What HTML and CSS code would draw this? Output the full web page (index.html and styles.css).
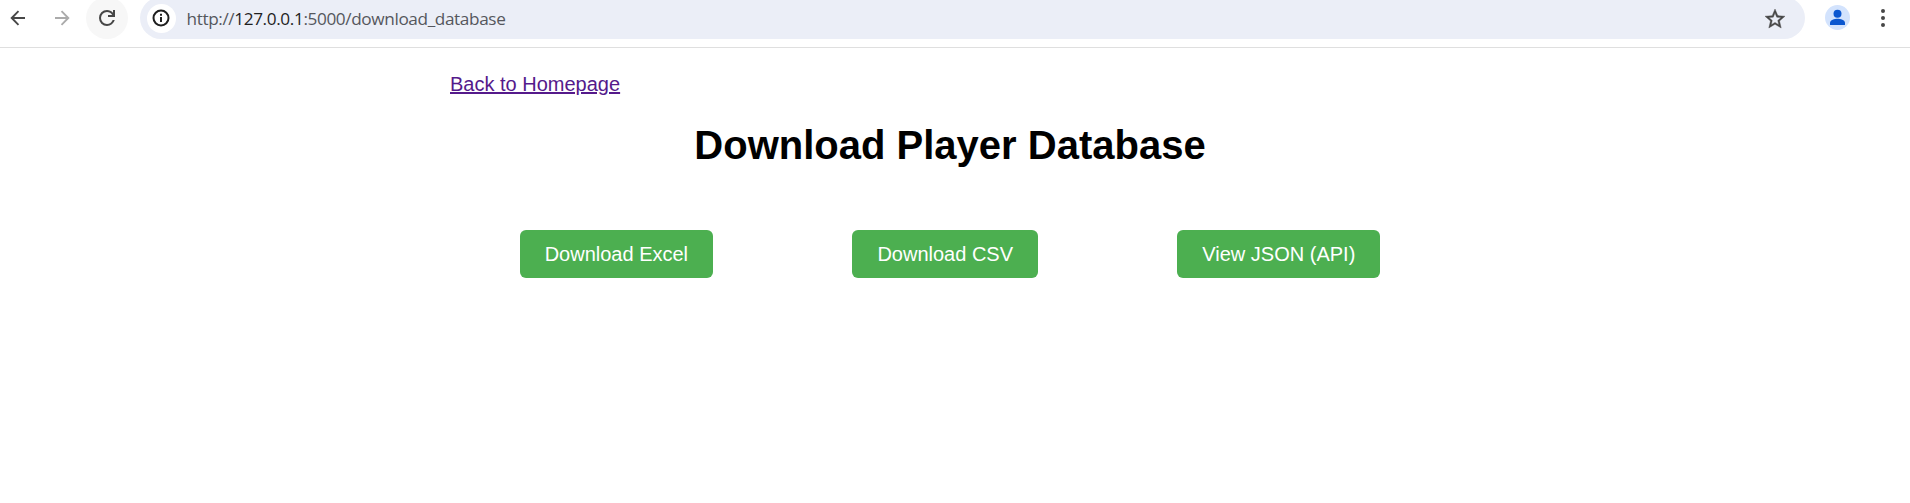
FILE: index.html
```html
<!DOCTYPE html>
<html lang="en">
<head>
<meta charset="utf-8">
<title>Download Player Database</title>
<link rel="stylesheet" href="styles.css">
</head>
<body>
<header class="toolbar">
  <svg class="nav-icon back" viewBox="0 0 16 16"><path d="M15 8H2M8.500 1.200 1.700 8l6.800 6.800"/></svg>
  <svg class="nav-icon forward" viewBox="0 0 16 16"><path d="M1 8h13M7.500 1.200 14.300 8l-6.800 6.800"/></svg>
  <div class="reload"><svg class="reload-icon" viewBox="4 4 16 16"><path d="M12 20q-3.350 0-5.675-2.325T4 12q0-3.350 2.325-5.675T12 4q1.725 0 3.300.713T18 6.750V4h2v7h-7V9h4.200q-.8-1.400-2.188-2.200T12 6Q9.500 6 7.750 7.750T6 12q0 2.500 1.750 4.250T12 18q1.925 0 3.475-1.100T17.650 14h2.100q-.7 2.650-2.850 4.325T12 20z"/></svg></div>
  <div class="address">
    <div class="info"><svg viewBox="0 0 18 18"><circle cx="9" cy="9" r="7.500"/><path d="M9 8v5M9 4.800v2"/></svg></div>
    <span class="url">http://<b>127.0.0.1</b>:5000/download_database</span>
    <svg class="star" viewBox="0 0 24 24"><path d="m22 9.240-7.190-.62L12 2 9.190 8.630 2 9.240l5.460 4.730L5.820 21 12 17.270 18.180 21l-1.630-7.030L22 9.240zM12 15.400l-3.760 2.270 1-4.280-3.320-2.880 4.380-.38L12 6.100l1.710 4.040 4.380.38-3.320 2.880 1 4.280L12 15.400z"/></svg>
  </div>
  <svg class="profile" viewBox="0 0 25 25"><circle class="disc" cx="12.500" cy="12.500" r="12.500"/><circle cx="12.500" cy="8.800" r="4"/><path d="M5 20v-2.200c0-2.700 4.600-4.100 7.500-4.100s7.500 1.400 7.500 4.100V20z"/></svg>
  <svg class="menu" viewBox="0 0 4 18"><circle cx="2" cy="2" r="2"/><circle cx="2" cy="9" r="2"/><circle cx="2" cy="16" r="2"/></svg>
</header>
<main class="page">
  <a class="home" href="#">Back to Homepage</a>
  <h1 class="title">Download Player Database</h1>
  <div class="actions">
    <a class="button" href="#">Download Excel</a>
    <a class="button" href="#">Download CSV</a>
    <a class="button" href="#">View JSON (API)</a>
  </div>
</main>
</body>
</html>
```
FILE: styles.css
```css
* { box-sizing: border-box; }
body {
  margin: 0;
  background: #fff;
  font-family: "Liberation Sans", Arial, sans-serif;
  font-size: 20px;
  overflow: hidden;
}
.toolbar {
  display: flex;
  align-items: flex-start;
  height: 48px;
  padding-left: 9.5px;
  border-bottom: 1px solid #dfdfdf;
}
.nav-icon {
  display: block;
  width: 16px;
  height: 16px;
  fill: none;
  stroke: #474747;
  stroke-width: 1.9;
}
.back { margin-top: 10px; }
.forward { margin: 10px 0 0 28.5px; stroke: #ababab; }
.reload {
  width: 42px;
  height: 42px;
  margin: -3px 0 0 16px;
  padding: 13px;
  border-radius: 50%;
  background: #f7f7f7;
}
.reload-icon { display: block; width: 16px; height: 16px; fill: #474747; }
.address {
  display: flex;
  align-items: center;
  width: 1665px;
  height: 42px;
  margin: -3px 0 0 12px;
  padding: 0 18px 0 7px;
  border-radius: 21px;
  background: #ebeef7;
}
.info {
  flex: none;
  width: 29px;
  height: 29px;
  padding: 5.5px 6px 5.5px 5px;
  border-radius: 50%;
  background: #fff;
}
.info svg {
  display: block;
  width: 18px;
  height: 18px;
  fill: none;
  stroke: #1f1f1f;
  stroke-width: 2;
}
.url {
  margin-left: 10.5px;
  padding-top: 1px;
  color: #55575d;
  font: 17.2px/24px "Open Sans", sans-serif;
  letter-spacing: -0.38px;
}
.url b { color: #1f1f1f; font-weight: 400; }
.star {
  width: 24px;
  height: 24px;
  margin: 1px 0 0 auto;
  fill: #474747;
  stroke: #474747;
  stroke-width: .4;
}
.profile { width: 25px; height: 25px; margin: 5px 0 0 20px; fill: #0b57d0; }
.disc { fill: #d3e3fd; }
.menu { width: 4px; height: 18px; margin: 9px 0 0 30.5px; fill: #474747; }
.page { width: 1000px; margin: 0 0 0 450px; padding-top: 25px; }
.home { display: block; width: max-content; line-height: 23px; color: #551a8b; text-decoration-thickness: 2px; }
.title { margin: 26px 0 0; font-size: 40px; line-height: 46px; text-align: center; }
.actions { display: flex; justify-content: space-around; margin-top: 62px; }
.button {
  padding: 12.5px 25px;
  border-radius: 6px;
  background: #4caf50;
  color: #fff;
  line-height: 23px;
  text-decoration: none;
}
```
